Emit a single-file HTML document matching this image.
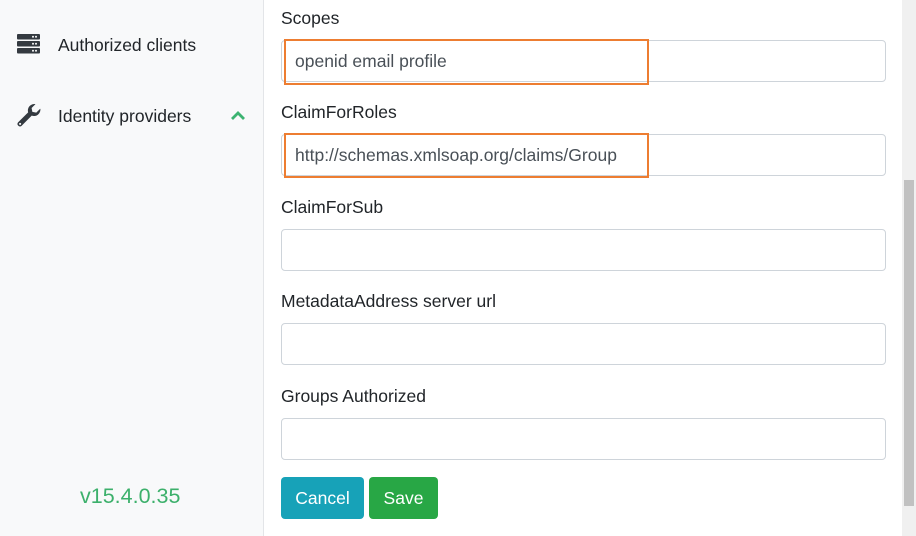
<!DOCTYPE html>
<html><head><style>
body{margin:0;width:916px;height:536px;overflow:hidden;font-family:"Liberation Sans",sans-serif;background:#fff;position:relative}
.side{position:absolute;left:0;top:0;width:263px;height:536px;background:#f8f9fa;border-right:1px solid #e3e5e8}
.nav{position:absolute;left:58px;font-size:17.5px;color:#212529}
.lbl{position:absolute;left:281px;font-size:17.5px;color:#212529}
.inp{position:absolute;left:281px;height:40px;border:1px solid #ced4da;border-radius:4px;background:#fff;font-size:17.5px;color:#495057;line-height:40px;padding-left:13px;box-sizing:content-box;width:590px}
.hl{position:absolute;left:284px;width:361px;border:2px solid #ed7d31}
.btn{position:absolute;top:477px;height:42px;border-radius:4px;color:#fff;font-size:17.5px;line-height:42px;text-align:center}
</style></head><body>
<div class="side">
<svg style="position:absolute;left:17px;top:34px" width="23" height="20" viewBox="0 0 23 20"><rect x="0" y="0" width="23" height="5.5" rx="1" fill="#343a40"/><rect x="0" y="7" width="23" height="5.5" rx="1" fill="#343a40"/><rect x="0" y="14" width="23" height="5.5" rx="1" fill="#343a40"/><circle cx="16" cy="2.8" r="1" fill="#fff"/><circle cx="19" cy="2.8" r="1" fill="#fff"/><circle cx="16" cy="9.8" r="1" fill="#fff"/><circle cx="19" cy="9.8" r="1" fill="#fff"/><circle cx="16" cy="16.8" r="1" fill="#fff"/><circle cx="19" cy="16.8" r="1" fill="#fff"/></svg>
<div class="nav" style="top:35px">Authorized clients</div>
<svg style="position:absolute;left:16px;top:103px" width="26" height="26" viewBox="0 0 24 24"><path d="M22.5 5.5a6 6 0 0 1-8 6.2L5 21.2a2.3 2.3 0 0 1-3.2-3.2l9.4-9.4A6 6 0 0 1 18 1l-3.6 3.6.7 3.6 3.6.7L22.3 5.3z" fill="#343a40"/><circle cx="3.8" cy="19.3" r="1" fill="#f8f9fa"/></svg>
<div class="nav" style="top:106px">Identity providers</div>
<svg style="position:absolute;left:230px;top:110px" width="16" height="11" viewBox="0 0 16 11"><path d="M2 9l6-6 6 6" fill="none" stroke="#3cb371" stroke-width="2.8"/></svg>
<div style="position:absolute;left:80px;top:484px;font-size:21.5px;color:#3cb06b">v15.4.0.35</div>
</div>
<div class="lbl" style="top:8px">Scopes</div>
<div class="inp" style="top:40px">openid email profile</div>
<div class="hl" style="top:39px;height:42px"></div>
<div class="lbl" style="top:102px">ClaimForRoles</div>
<div class="inp" style="top:134px">http://schemas.xmlsoap.org/claims/Group</div>
<div class="hl" style="top:133px;height:41px"></div>
<div class="lbl" style="top:197px">ClaimForSub</div>
<div class="inp" style="top:229px"></div>
<div class="lbl" style="top:291px">MetadataAddress server url</div>
<div class="inp" style="top:323px"></div>
<div class="lbl" style="top:386px">Groups Authorized</div>
<div class="inp" style="top:418px"></div>
<div class="btn" style="left:281px;width:83px;background:#17a2b8">Cancel</div>
<div class="btn" style="left:369px;width:69px;background:#28a745">Save</div>
<div style="position:absolute;left:902px;top:0;width:14px;height:536px;background:#f0f0f0"></div>
<div style="position:absolute;left:904px;top:180px;width:10px;height:326px;background:#c1c1c1"></div>
</body></html>
